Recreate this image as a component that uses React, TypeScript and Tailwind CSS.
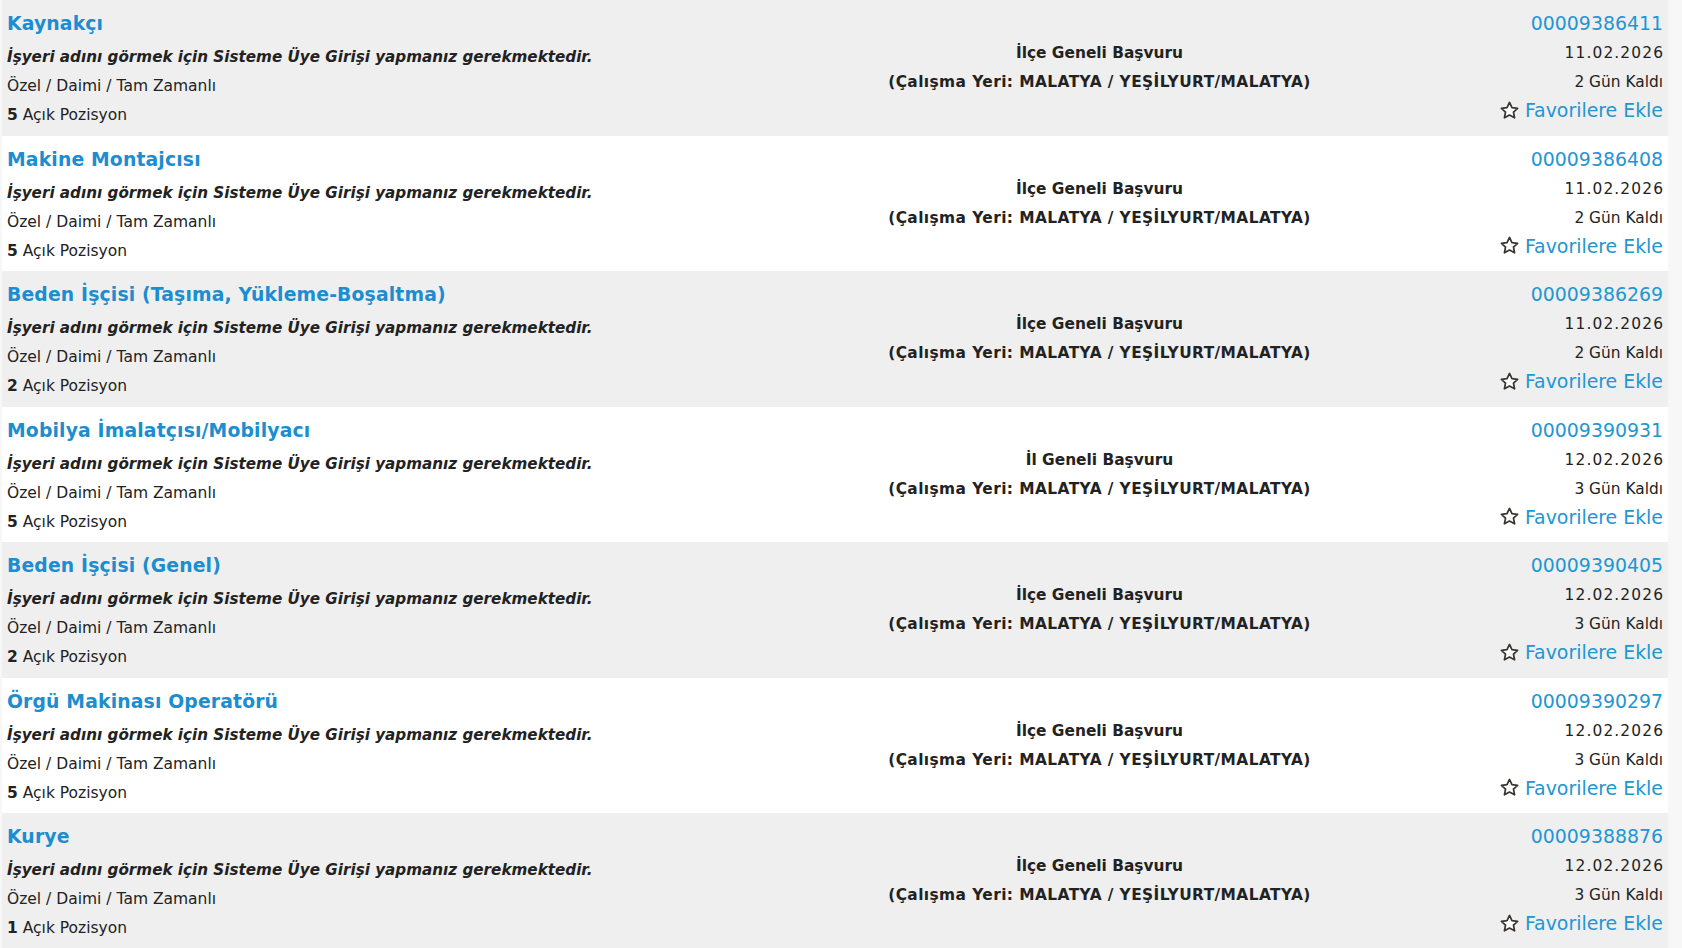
import React from "react";

type Job = {
  title: string;
  scope: string;
  no: string;
  date: string;
  left: string;
  count: number;
};

const jobs: Job[] = [
  { title: "Kaynakçı", scope: "İlçe Geneli Başvuru", no: "00009386411", date: "11.02.2026", left: "2 Gün Kaldı", count: 5 },
  { title: "Makine Montajcısı", scope: "İlçe Geneli Başvuru", no: "00009386408", date: "11.02.2026", left: "2 Gün Kaldı", count: 5 },
  { title: "Beden İşçisi (Taşıma, Yükleme-Boşaltma)", scope: "İlçe Geneli Başvuru", no: "00009386269", date: "11.02.2026", left: "2 Gün Kaldı", count: 2 },
  { title: "Mobilya İmalatçısı/Mobilyacı", scope: "İl Geneli Başvuru", no: "00009390931", date: "12.02.2026", left: "3 Gün Kaldı", count: 5 },
  { title: "Beden İşçisi (Genel)", scope: "İlçe Geneli Başvuru", no: "00009390405", date: "12.02.2026", left: "3 Gün Kaldı", count: 2 },
  { title: "Örgü Makinası Operatörü", scope: "İlçe Geneli Başvuru", no: "00009390297", date: "12.02.2026", left: "3 Gün Kaldı", count: 5 },
  { title: "Kurye", scope: "İlçe Geneli Başvuru", no: "00009388876", date: "12.02.2026", left: "3 Gün Kaldı", count: 1 },
];

function Star() {
  return (
    <svg width="19" height="19" viewBox="0 0 24 24" className="mr-[6px] shrink-0">
      <path
        d="M12 1.8l3.1 6.5 7.1.9-5.2 4.9 1.4 7.1L12 17.7l-6.4 3.5 1.4-7.1-5.2-4.9 7.1-.9z"
        fill="#ffffff"
        stroke="#3a3530"
        strokeWidth="2.2"
        strokeLinejoin="round"
      />
    </svg>
  );
}

function Row({ job, gray }: { job: Job; gray: boolean }) {
  return (
    <div
      className={`grid grid-cols-[879px_427px_1fr] h-[135.5px] pt-[9px] pl-[5px] pr-[5px] ${
        gray ? "bg-[#efefef]" : "bg-white"
      }`}
    >
      <div className="flex flex-col">
        <a className="text-[18.8px] leading-[29px] font-bold text-[#1b8dd0] whitespace-nowrap mb-[5px] tracking-[0.15px]">
          {job.title}
        </a>
        <div className="text-[15.2px] leading-[29px] font-bold italic text-[#222222] whitespace-nowrap">
          İşyeri adını görmek için Sisteme Üye Girişi yapmanız gerekmektedir.
        </div>
        <div className="text-[15.5px] leading-[29px] text-[#222222] whitespace-nowrap">
          Özel / Daimi / Tam Zamanlı
        </div>
        <div className="text-[15.5px] leading-[29px] text-[#222222] whitespace-nowrap">
          <span className="font-bold">{job.count}</span> Açık Pozisyon
        </div>
      </div>
      <div className="flex flex-col items-center pt-[30px] text-[15.4px] leading-[29px] font-bold text-[#222222] whitespace-nowrap">
        <div>{job.scope}</div>
        <div className="tracking-[0.42px]">(Çalışma Yeri: MALATYA / YEŞİLYURT/MALATYA)</div>
      </div>
      <div className="flex flex-col items-end">
        <a className="text-[18.9px] leading-[28px] mb-[2px] text-[#2196d3] whitespace-nowrap">{job.no}</a>
        <div className="text-[15.4px] leading-[29px] tracking-[1.15px] mr-[-1.15px] text-[#222222] whitespace-nowrap">
          {job.date}
        </div>
        <div className="text-[15.4px] leading-[29px] text-[#222222] whitespace-nowrap">{job.left}</div>
        <a className="flex items-center text-[18.9px] leading-[26px] text-[#2196d3] whitespace-nowrap">
          <Star />
          Favorilere Ekle
        </a>
      </div>
    </div>
  );
}

export default function App() {
  return (
    <div className="min-h-[948px] w-full bg-[#f7f7f7] font-['DejaVu_Sans',Verdana,sans-serif] overflow-hidden">
      <div className="ml-[2px] w-[1666px] flex flex-col">
        {jobs.map((j, i) => (
          <Row key={j.no} job={j} gray={i % 2 === 0} />
        ))}
      </div>
    </div>
  );
}
